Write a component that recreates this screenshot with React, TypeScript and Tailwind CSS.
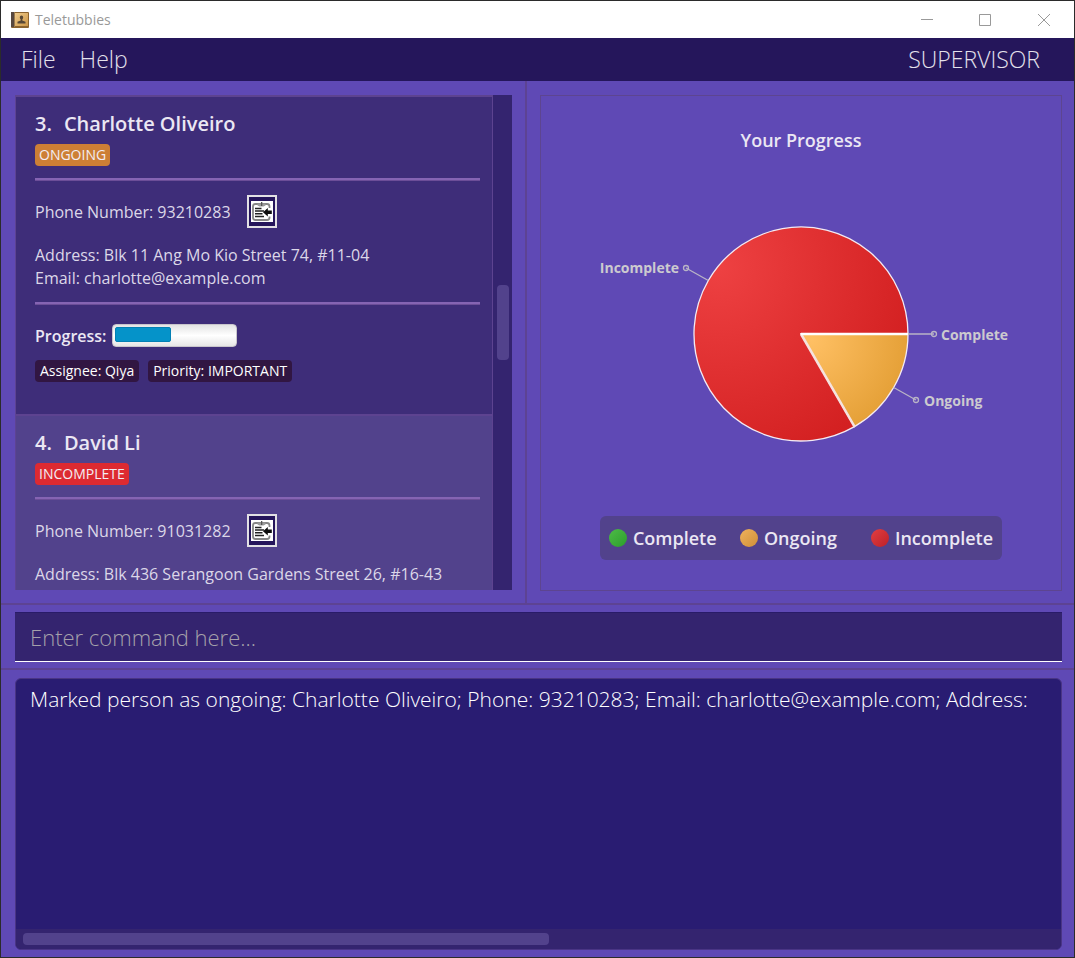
import React from "react";

type Status = "ONGOING" | "INCOMPLETE";

interface Person {
  index: number;
  name: string;
  status: Status;
  phone: string;
  address: string;
  email: string;
  progress: number;
  assignee: string;
  priority: string;
}

const people: Person[] = [
  {
    index: 3,
    name: "Charlotte Oliveiro",
    status: "ONGOING",
    phone: "93210283",
    address: "Blk 11 Ang Mo Kio Street 74, #11-04",
    email: "charlotte@example.com",
    progress: 47,
    assignee: "Qiya",
    priority: "IMPORTANT",
  },
  {
    index: 4,
    name: "David Li",
    status: "INCOMPLETE",
    phone: "91031282",
    address: "Blk 436 Serangoon Gardens Street 26, #16-43",
    email: "",
    progress: 0,
    assignee: "",
    priority: "",
  },
];

const statusColor: Record<Status, string> = {
  ONGOING: "bg-[#cd7f35]",
  INCOMPLETE: "bg-[#dd2a31]",
};

function AppIcon() {
  return (
    <svg width="18" height="18" viewBox="0 0 18 18" aria-hidden="true">
      <defs>
        <linearGradient id="book" x1="0" y1="0" x2="1" y2="1">
          <stop offset="0" stopColor="#efcb8c" />
          <stop offset="1" stopColor="#cd9747" />
        </linearGradient>
      </defs>
      <rect x="0" y="1" width="18" height="16" rx="1" fill="#8b632e" />
      <rect x="4" y="2" width="13" height="13" fill="url(#book)" />
      <rect x="0" y="1" width="3" height="15" fill="#57483f" />
      <rect x="3" y="1" width="1" height="15" fill="#9a7a4e" />
      <path
        d="M10.500 4.500c1 0 1.700.8 1.700 1.900 0 .8-.4 1.500-.9 2v1.100l3.200 1.200v1.800h-8v-1.800l3.200-1.200V8.400c-.5-.5-.9-1.200-.9-2 0-1.100.7-1.900 1.700-1.900z"
        fill="#574735"
      />
    </svg>
  );
}

function CopyIcon() {
  return (
    <svg width="22" height="21" viewBox="0 0 22 21" aria-hidden="true">
      <rect width="22" height="21" fill="#fff" />
      <path
        d="M18.500 7V5.500a2.500 2.500 0 0 0-2.500-2.500H4.500a2.500 2.500 0 0 0-2.500 2.500V16.500a2.500 2.500 0 0 0 2.500 2.500H16a2.500 2.500 0 0 0 2.500-2.500v-1"
        fill="none"
        stroke="#858585"
        strokeWidth="1.800"
      />
      <path d="M6.500 2.500h8v2l-2 1h-4l-2-1z" fill="#9a9a9a" />
      <path d="M10 1h1.300v4H10z" fill="#555" />
      <path d="M4 7.500h6.500M4 10h9M4 12.800h7.500M4 15.500h9" stroke="#222" strokeWidth="1.500" />
      <path d="M12 11.300L16.800 7v2.600h4v3.400h-4v2.600z" fill="#0c0c0c" />
    </svg>
  );
}

function Rule() {
  return <div className="h-[3px] border-b border-[#6c4e98] bg-[#8564b3]" />;
}

function Tag({ children }: { children: React.ReactNode }) {
  return (
    <span className="rounded-sm bg-[#311642] px-[5px] text-sm leading-[22px] font-medium text-white">{children}</span>
  );
}

function PersonCard({ person }: { person: Person }) {
  return (
    <li
      className={`h-[319px] shrink-0 border-t-2 border-r border-[#5d4390] pt-[13px] pr-3 pl-[19px] ${
        person.index % 2 ? "bg-[#3e2d79]" : "bg-[#52428c]"
      }`}
    >
      <h2 className="flex h-7 items-center gap-3 text-xl font-semibold text-[#ebe7f3]">
        <span>{person.index}.</span>
        <span>{person.name}</span>
      </h2>
      <div className="mt-1.5 mb-3 flex">
        <span
          className={`rounded-sm px-1 text-sm leading-[22px] font-medium text-[#f3edf3] ${statusColor[person.status]}`}
        >
          {person.status}
        </span>
      </div>
      <Rule />
      <div className="mt-3.5 flex h-[33px] items-center gap-4">
        <span>Phone Number: {person.phone}</span>
        <button
          type="button"
          aria-label={`Copy phone number of ${person.name}`}
          className="flex h-[33px] w-[30px] items-center justify-center border-2 border-[#e2e0e4] bg-[#25155b]"
        >
          <CopyIcon />
        </button>
      </div>
      <p className="mt-4 leading-[23px]">Address: {person.address}</p>
      {person.email && (
        <>
          <p className="mb-3 leading-[23px]">Email: {person.email}</p>
          <Rule />
          <div className="mt-[19px] flex h-[23px] items-center gap-1.5">
            <span className="font-semibold text-[#ebe7f3]">Progress:</span>
            <div
              role="progressbar"
              aria-label="Progress"
              aria-valuenow={person.progress}
              className="h-[23px] w-[125px] rounded border border-[#c9c6cc] bg-linear-to-b from-[#e4e4e4] via-white to-[#e6e6e6] p-0.5"
            >
              <div
                className="h-[15px] rounded-xs border border-[#0380b4] bg-[#0593c9]"
                style={{ width: `${person.progress}%` }}
              />
            </div>
          </div>
          <div className="mt-[13px] flex gap-[9px]">
            <Tag>Assignee: {person.assignee}</Tag>
            <Tag>Priority: {person.priority}</Tag>
          </div>
        </>
      )}
    </li>
  );
}

function PieChart() {
  return (
    <svg width="430" height="230" viewBox="0 0 430 230" role="img" aria-label="Your Progress">
      <defs>
        <radialGradient id="red" gradientUnits="userSpaceOnUse" cx="132" cy="48" r="205">
          <stop offset="0" stopColor="#ee4142" />
          <stop offset="1" stopColor="#d32021" />
        </radialGradient>
        <radialGradient id="amber" gradientUnits="userSpaceOnUse" cx="225" cy="120" r="105">
          <stop offset="0" stopColor="#ffc064" />
          <stop offset="1" stopColor="#e39e34" />
        </radialGradient>
      </defs>
      <path
        d="M215 115H322A107 107 0 1 0 268.500 207.660Z"
        fill="url(#red)"
        stroke="#f3eaf3"
        strokeWidth="1.300"
      />
      <path
        d="M215 115H322A107 107 0 0 1 268.500 207.660Z"
        fill="url(#amber)"
        stroke="#f3eaf3"
        strokeWidth="1.300"
      />
      <path d="M215 115L268.500 207.660" stroke="#f5e2df" strokeWidth="2.500" />
      <path d="M215 115H322" stroke="#fff" strokeWidth="2.500" />
      <g fill="none" stroke="#b9b4c6" strokeWidth="1.300">
        <path d="M322 115H348M307.700 168.500L330 181M122.300 61.500L100 49" />
        <circle cx="348" cy="115" r="2.500" />
        <circle cx="330" cy="181" r="2.500" />
        <circle cx="100" cy="49" r="2.500" />
      </g>
      <g className="fill-[#cccacf] text-sm font-bold">
        <text x="355" y="121">Complete</text>
        <text x="338" y="187">Ongoing</text>
        <text x="93" y="54" textAnchor="end">Incomplete</text>
      </g>
    </svg>
  );
}

const legend = [
  { label: "Complete", color: "from-[#4dbb47] to-[#2b9e2b]" },
  { label: "Ongoing", color: "from-[#efb25c] to-[#cf8f38]" },
  { label: "Incomplete", color: "from-[#e23e41] to-[#bd2029]" },
];

const result =
  "Marked person as ongoing: Charlotte Oliveiro; Phone: 93210283; Email: charlotte@example.com; Address:";

export default function App() {
  return (
    <div className="flex h-screen flex-col overflow-hidden border border-[#2b2b2b] bg-[#5f49b5] font-['Open_Sans',sans-serif] text-base text-[#dcd7e8]">
      <header className="flex h-[37px] shrink-0 items-center bg-white pl-2.5 text-[#999]">
        <AppIcon />
        <h1 className="ml-1.5 text-sm">Teletubbies</h1>
        <div className="ml-auto flex h-full">
          <button type="button" aria-label="Minimize" className="flex w-[58px] items-center justify-center">
            <svg width="12" height="12" stroke="#999" fill="none" aria-hidden="true"><path d="M0 5.500H12" /></svg>
          </button>
          <button type="button" aria-label="Maximize" className="flex w-[58px] items-center justify-center">
            <svg width="12" height="12" stroke="#999" fill="none" aria-hidden="true"><path d="M.5.5h11v11H.5z" /></svg>
          </button>
          <button type="button" aria-label="Close" className="flex w-[60px] items-center justify-center">
            <svg width="12" height="12" stroke="#999" fill="none" aria-hidden="true"><path d="M0 0L12 12M12 0L0 12" /></svg>
          </button>
        </div>
      </header>

      <nav className="flex h-[43px] shrink-0 items-center gap-6 bg-[#25165b] px-5 text-[23px] font-light text-[#e4e1ec]">
        <button type="button">File</button>
        <button type="button">Help</button>
        <span className="mr-3.5 ml-auto">SUPERVISOR</span>
      </nav>

      <main className="flex min-h-0 flex-1 flex-col">
        <div className="flex min-h-0 flex-[522]">
          <section className="flex min-h-0 flex-[497] border-r-2 border-[#5d4393] pt-3.5 pr-[13px] pb-[13px] pl-3.5">
            <ul className="flex min-w-0 flex-1 flex-col overflow-hidden border-l border-[#5d4393]">
              {people.map((person) => (
                <PersonCard key={person.index} person={person} />
              ))}
            </ul>
            <div className="flex w-[19px] flex-col bg-[#34246f] px-1">
              <div className="grow-[190]" />
              <div className="h-[75px] w-3 rounded bg-[#52428c]" />
              <div className="grow-[230]" />
            </div>
          </section>
          <section className="flex min-h-0 flex-[522] pt-3.5 pr-3 pb-3 pl-[13px]">
            <div className="flex flex-1 flex-col items-center border border-[#5d4590] pt-8 pb-[30px]">
              <h2 className="text-lg leading-6 font-semibold text-[#ebe7f3]">Your Progress</h2>
              <div className="flex flex-1 items-center">
                <PieChart />
              </div>
              <ul className="grid h-11 grid-cols-[131px_131px_auto] items-center rounded-md bg-[#52428c] px-[9px] text-lg font-semibold text-[#ebe7f3]">
                {legend.map((item) => (
                  <li key={item.label} className="flex items-center gap-1.5">
                    <span className={`size-[18px] rounded-full bg-linear-to-br ${item.color}`} />
                    {item.label}
                  </li>
                ))}
              </ul>
            </div>
          </section>
        </div>

        <div className="shrink-0 border-y-2 border-[#5d4393] pt-[7px] pr-3 pb-1.5 pl-3.5">
          <input
            type="text"
            aria-label="Command"
            placeholder="Enter command here..."
            className="block h-[50px] w-full border-t border-b border-t-[#291b68] border-b-white bg-[#34246f] px-[15px] text-[22px] font-light text-white outline-none placeholder:text-[#a5a1aa]"
          />
        </div>

        <div className="flex min-h-0 flex-[272] pt-2 pr-3 pb-[7px] pl-3.5">
          <div className="flex flex-1 flex-col overflow-hidden rounded-md border border-[#4a3585] bg-[#291c72]">
            <textarea
              readOnly
              wrap="off"
              aria-label="Result"
              value={result}
              className="block w-full flex-1 resize-none overflow-hidden pt-1 pl-3.5 text-[21px] leading-8 font-light text-white outline-none"
            />
            <div className="flex h-5 shrink-0 items-center bg-[#34246f] px-[7px]">
              <div className="h-3 w-[51%] rounded bg-[#52428c]" />
            </div>
          </div>
        </div>
      </main>
    </div>
  );
}
